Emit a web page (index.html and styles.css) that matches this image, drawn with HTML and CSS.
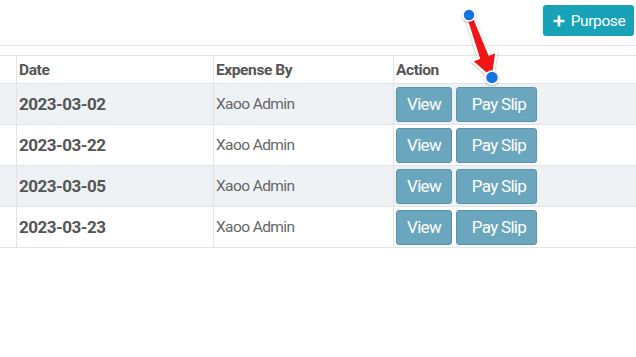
FILE: index.html
```html
<!DOCTYPE html>
<html>
<head>
<meta charset="utf-8">
<link rel="stylesheet" href="styles.css">
</head>
<body>
<div class="page">
  <div class="toolbar">
    <button class="btn-purpose"><svg class="plus" viewBox="0 0 12 12" width="12" height="12"><path d="M6 0.5v11M0.5 6h11" stroke="#fff" stroke-width="2.6"/></svg><span>Purpose</span></button>
  </div>
  <div class="divider"></div>
  <table class="grid">
    <thead>
      <tr><th class="c0"></th><th class="c1">Date</th><th class="c2">Expense By</th><th class="c3">Action</th></tr>
    </thead>
    <tbody>
      <tr class="odd"><td></td><td class="date">2023-03-02</td><td class="who">Xaoo Admin</td><td class="act"><button class="btn">View</button><button class="btn slip">Pay Slip</button></td></tr>
      <tr><td></td><td class="date">2023-03-22</td><td class="who">Xaoo Admin</td><td class="act"><button class="btn">View</button><button class="btn slip">Pay Slip</button></td></tr>
      <tr class="odd"><td></td><td class="date">2023-03-05</td><td class="who">Xaoo Admin</td><td class="act"><button class="btn">View</button><button class="btn slip">Pay Slip</button></td></tr>
      <tr><td></td><td class="date">2023-03-23</td><td class="who">Xaoo Admin</td><td class="act"><button class="btn">View</button><button class="btn slip">Pay Slip</button></td></tr>
    </tbody>
  </table>
  <svg class="annot" width="636" height="357" viewBox="0 0 636 357">
    <defs>
      <filter id="sh" x="-50%" y="-50%" width="200%" height="200%">
        <feDropShadow dx="0" dy="1" stdDeviation="1.2" flood-color="#000" flood-opacity="0.3"/>
      </filter>
    </defs>
    <polygon points="472.3,13.8 489.2,54.6 496.3,51.9 492.5,79 471.9,61.1 479,58.4 465.7,16.2" fill="#f01515" stroke="#fff" stroke-width="2" stroke-linejoin="round" filter="url(#sh)"/>
    <circle cx="469" cy="15" r="6" fill="#1473e6" stroke="#fff" stroke-width="1.5" filter="url(#sh)"/>
    <circle cx="492" cy="77.5" r="6.5" fill="#1473e6" stroke="#fff" stroke-width="1.5" filter="url(#sh)"/>
  </svg>
</div>
</body>
</html>
```

FILE: styles.css
```css
html, body {
  margin: 0;
  padding: 0;
  background: #fff;
}
body {
  font-family: Roboto, "Liberation Sans", sans-serif;
  width: 636px;
  height: 357px;
  overflow: hidden;
}
.page {
  position: relative;
  width: 636px;
  height: 357px;
}
.toolbar {
  height: 45px;
  box-sizing: border-box;
  padding: 5px 2px 0 0;
  display: flex;
  justify-content: flex-end;
  align-items: flex-start;
}
.btn-purpose {
  width: 91px;
  height: 31px;
  background: #17a2b8;
  border: none;
  border-radius: 3px;
  color: #fff;
  font-family: Roboto, "Liberation Sans", sans-serif;
  font-size: 15.5px;
  letter-spacing: -0.4px;
  display: flex;
  align-items: center;
  justify-content: center;
  gap: 6px;
  padding: 0 0 0 1px;
}
.plus {
  display: block;
}
.divider {
  border-top: 1px solid #e4e7ea;
  height: 9px;
}
.grid {
  width: 636px;
  border-collapse: collapse;
  table-layout: fixed;
}
.grid th, .grid td {
  border: 1px solid #e1e4e8;
  text-align: left;
  padding: 0 0 0 2px;
  white-space: nowrap;
  overflow: hidden;
}
.grid th:first-child, .grid td:first-child {
  border-left: none;
}
.grid th:last-child, .grid td:last-child {
  border-right: none;
}
.c0 { width: 14px; }
.c1 { width: 194px; }
.c2 { width: 177px; }
.grid th {
  height: 27px;
  font-size: 15.5px;
  font-weight: 700;
  color: #555;
  letter-spacing: -0.4px;
}
.grid td {
  height: 40px;
}
.grid tr.odd td {
  background: #eff2f5;
}
.date {
  font-size: 17px;
  font-weight: 700;
  color: #555;
  letter-spacing: -0.5px;
}
.who {
  font-size: 15.5px;
  color: #666;
  letter-spacing: -0.6px;
}
.act {
  font-size: 0;
  padding-left: 2px !important;
}
.btn {
  height: 35px;
  box-sizing: border-box;
  background: #6ba6bf;
  border: 1px solid #5d93aa;
  border-radius: 3px;
  color: #fff;
  font-family: Roboto, "Liberation Sans", sans-serif;
  font-size: 17px;
  letter-spacing: -0.7px;
  width: 56px;
  padding: 0;
  margin-right: 4px;
  vertical-align: middle;
}
.btn.slip {
  width: 81px;
  padding-left: 5px;
}
.annot {
  position: absolute;
  left: 0;
  top: 0;
  pointer-events: none;
}
```
